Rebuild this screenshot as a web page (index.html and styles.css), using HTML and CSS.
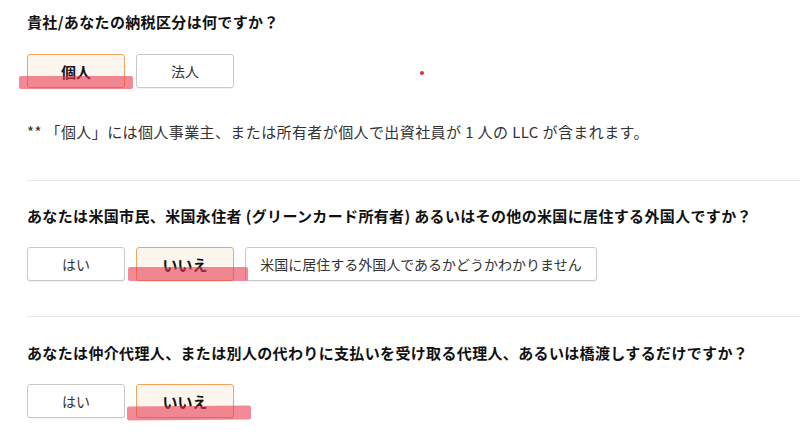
FILE: index.html
```html
<!DOCTYPE html>
<html lang="ja">
<head>
  <meta charset="UTF-8">
  <title>納税区分</title>
  <meta name="viewport" content="width=device-width, initial-scale=1.0"/>
  <link rel="stylesheet" href="styles.css">
</head>
<body>
  <span class="dot"></span>

  <div class="question first">
    <h2>貴社/あなたの納税区分は何ですか？</h2>
    <div class="choices">
      <button class="choice selected">個人</button>
      <button class="choice">法人</button>
      <span class="marker m1"></span>
    </div>
    <p class="note">** 「個人」には個人事業主、または所有者が個人で出資社員が 1 人の LLC が含まれます。</p>
  </div>

  <div class="question">
    <h2>あなたは米国市民、米国永住者 (グリーンカード所有者) あるいはその他の米国に居住する外国人ですか？</h2>
    <div class="choices">
      <button class="choice">はい</button>
      <button class="choice selected">いいえ</button>
      <button class="choice wide">米国に居住する外国人であるかどうかわかりません</button>
      <span class="marker m2"></span>
    </div>
  </div>

  <div class="question last">
    <h2>あなたは仲介代理人、または別人の代わりに支払いを受け取る代理人、あるいは橋渡しするだけですか？</h2>
    <div class="choices">
      <button class="choice">はい</button>
      <button class="choice selected">いいえ</button>
      <span class="marker m3"></span>
    </div>
  </div>
</body>
</html>
```

FILE: styles.css
```css
body {
  margin: 0;
  padding: 12px 0 0 27px;
  background: #fff;
  font-family: "Noto Sans CJK JP", "Noto Sans", sans-serif;
  color: #222;
  overflow: hidden;
}
.dot {
  position: absolute;
  left: 420px;
  top: 71px;
  width: 4px;
  height: 4px;
  border-radius: 50%;
  background: #e0322a;
}
.question {
  border-top: 1px solid #e9e9e9;
  padding: 25px 0 35px;
}
.question.first {
  border-top: none;
  padding: 0 0 38px;
}
.question.last {
  padding-top: 26px;
}
h2 {
  margin: 0 0 21px;
  font-size: 15px;
  line-height: 20px;
  font-weight: bold;
  letter-spacing: 0.35px;
  color: #111;
}
.question.first h2 {
  margin-bottom: 22px;
}
.choices {
  position: relative;
  display: flex;
  gap: 11px;
}
.choice {
  width: 98px;
  height: 34px;
  padding: 0 12px;
  border: 1px solid #c9c9c9;
  border-radius: 3px;
  background: #fff;
  box-shadow: 0 1px 1px rgba(0,0,0,0.06);
  font-family: inherit;
  font-size: 14px;
  color: #333;
  cursor: pointer;
}
.choice.wide {
  width: 352px;
}
.choice.selected {
  border-color: #f2a45e;
  background: #fdf6ef;
  color: #111;
  font-weight: bold;
  font-size: 15px;
}
.marker {
  position: absolute;
  height: 14px;
  background: rgba(232, 60, 80, 0.6);
  border-radius: 2px;
}
.m1 {
  left: -8px;
  top: 22px;
  width: 114px;
  height: 13px;
}
.m2 {
  left: 101px;
  top: 20px;
  width: 120px;
}
.m3 {
  left: 100px;
  top: 22px;
  width: 124px;
  transform: rotate(-0.4deg);
}
.note {
  margin: 34px 0 0;
  font-size: 15px;
  line-height: 20px;
  letter-spacing: 0.4px;
  color: #333;
}
```
